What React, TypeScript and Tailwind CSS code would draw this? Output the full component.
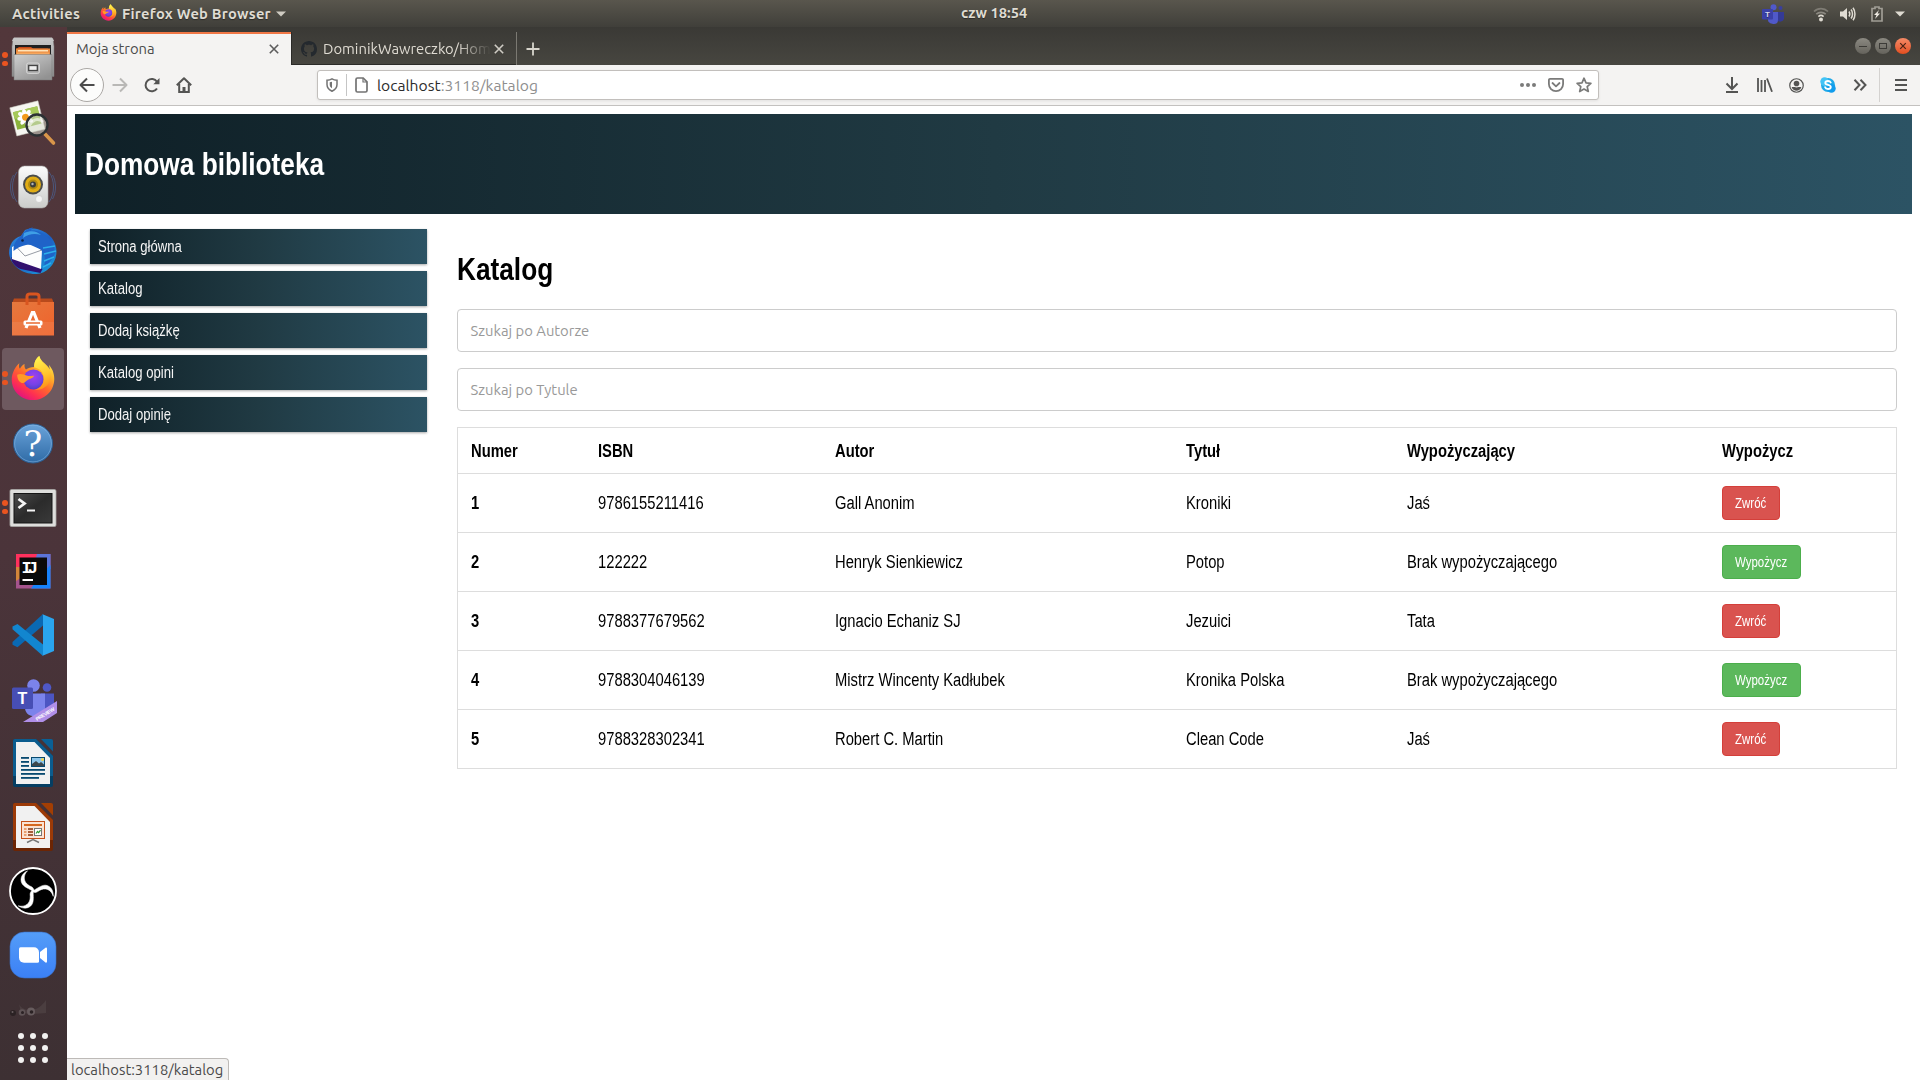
import type { ReactNode } from "react";

/* Condensed text: Liberation Sans squeezed to the proportions of its narrow cut. */
function Narrow({ children, className = "" }: { children: ReactNode; className?: string }) {
  return (
    <span className={`inline-block origin-left scale-x-[0.82] whitespace-nowrap font-['Liberation_Sans',sans-serif] ${className}`}>
      {children}
    </span>
  );
}

function FirefoxLogo({ size }: { size: number }) {
  return (
    <svg width={size} height={size} viewBox="0 0 48 48">
      <defs>
        <linearGradient id="ffBody" x1="0.85" y1="0.05" x2="0.25" y2="0.95">
          <stop offset="0" stopColor="#fff44f" />
          <stop offset="0.3" stopColor="#ffb32a" />
          <stop offset="0.55" stopColor="#ff6a2c" />
          <stop offset="0.8" stopColor="#ff3150" />
          <stop offset="1" stopColor="#e3157c" />
        </linearGradient>
        <radialGradient id="ffGlobe" cx="0.5" cy="0.35" r="0.7">
          <stop offset="0" stopColor="#a040f0" />
          <stop offset="0.6" stopColor="#7542e5" />
          <stop offset="1" stopColor="#4a3fc0" />
        </radialGradient>
        <linearGradient id="ffFlame" x1="0.4" y1="0" x2="0.6" y2="1">
          <stop offset="0" stopColor="#fff44f" />
          <stop offset="0.6" stopColor="#ffc12c" />
          <stop offset="1" stopColor="#ff8a16" />
        </linearGradient>
      </defs>
      <path
        d="M30.5 1c-4.500 3.500-5.500 8.500-5.300 11.500-3.700.1-6.200 1.100-8.500 2.600-.9-.6-2-2.700-1.500-5.600-2.200 1-3.700 2.900-4.800 4.900C9 13.400 9.200 10.600 9.800 8.700 6.500 11 1.800 18.500 1.800 25.500 1.800 37.800 11.800 47 24 47s22.200-9.600 22.200-22c0-6.500-2.700-11.700-5.700-14.500.6 1.700.9 3.500.9 4.600C39 9 32.500 8 30.500 1z"
        fill="url(#ffBody)"
      />
      <circle cx="24.500" cy="25.500" r="10.500" fill="url(#ffGlobe)" />
      <path d="M30.500 1c-4.500 3.500-5.300 8-5.300 12 5 .5 9.300 4 10 10 .9 7-3.600 12-9.200 13.200 9.500 1 16.500-5.700 16.500-14.200C42.500 12 32.500 10 30.500 1z" fill="url(#ffFlame)" />
      <path d="M7.500 20.500c4-1.500 8 .3 10.500 1.200 2.500.8 5-.2 7 0-.3 2.200-4.500 3.200-6.500 4.300-2.600 1.400-2.600 3-5 3.200-3.800 0-6-4.500-6-8.700z" fill="#ff9a28" />
    </svg>
  );
}

function FilesIcon() {
  return (
    <svg width="48" height="48" viewBox="0 0 48 48">
      <defs>
        <linearGradient id="fiTop" x1="0" y1="0" x2="0" y2="1">
          <stop offset="0" stopColor="#c9c9c9" />
          <stop offset="1" stopColor="#8e8e8e" />
        </linearGradient>
        <linearGradient id="fiFront" x1="0" y1="0" x2="0.700" y2="1">
          <stop offset="0" stopColor="#cfcfcf" />
          <stop offset="1" stopColor="#929292" />
        </linearGradient>
      </defs>
      <path d="M4 3.500h40l1 8v30H3v-30z" fill="url(#fiTop)" stroke="#7d7d7d" strokeWidth="0.500" />
      <path d="M5 2.500h38l2 3.500H3z" fill="#c6c6c6" />
      <rect x="6" y="10" width="36" height="12" fill="#202020" />
      <path d="M10 12h12l2 1.500h15V22H7v-8z" fill="#c74a19" />
      <rect x="7" y="13.500" width="34" height="8" fill="#e9893f" />
      <rect x="9" y="15" width="30" height="1.500" fill="#ffe3b8" />
      <rect x="8" y="17.500" width="32" height="4" fill="#f6a65c" />
      <path d="M5 19.500h38V45H5z" fill="url(#fiFront)" stroke="#777" strokeWidth="0.500" />
      <rect x="17.500" y="28" width="13" height="10.500" rx="2" fill="#b2b2b2" stroke="#dadada" strokeWidth="0.800" />
      <rect x="19.700" y="30.500" width="8.600" height="5" fill="#efefef" stroke="#454545" strokeWidth="1.300" />
    </svg>
  );
}

function ImageViewerIcon() {
  return (
    <svg width="48" height="48" viewBox="0 0 48 48">
      <g transform="rotate(-14 18 20)">
        <rect x="4" y="5" width="29" height="29" fill="#f6f6f1" stroke="#c9c9c0" strokeWidth="0.500" />
        <rect x="6" y="10" width="25" height="18" fill="#8bb33c" />
        <rect x="6" y="10" width="25" height="7" fill="#a6c95a" />
        {[0, 45, 90, 135, 180, 225, 270, 315].map((a) => (
          <ellipse key={a} cx="17" cy="14" rx="2.200" ry="4.500" fill="#fff" transform={`rotate(${a} 17 18)`} />
        ))}
        <circle cx="17" cy="18" r="3.500" fill="#f39a1b" />
      </g>
      <path d="M36 35l8.500 9" stroke="#d9964a" strokeWidth="3.600" strokeLinecap="round" />
      <circle cx="28" cy="26" r="10.500" fill="#d9dfcf" fillOpacity="0.550" stroke="#2c3134" strokeWidth="2.400" />
      <path d="M20 27c3-6 9-9 14-4" stroke="#fff" strokeOpacity="0.600" strokeWidth="3" fill="none" />
    </svg>
  );
}

function SpeakerIcon() {
  return (
    <svg width="48" height="48" viewBox="0 0 48 48">
      <g fill="none" stroke="#4b5f8c" strokeWidth="1" opacity="0.800">
        <path d="M8 9c-6 8-6 22 0 30M40 9c6 8 6 22 0 30M4.500 12c-4 7-4 17 0 24M43.500 12c4 7 4 17 0 24" />
      </g>
      <defs>
        <linearGradient id="spk" x1="0" y1="0" x2="0" y2="1">
          <stop offset="0" stopColor="#fcfcfc" />
          <stop offset="1" stopColor="#cbccca" />
        </linearGradient>
      </defs>
      <rect x="9.500" y="3" width="29.500" height="42" rx="6" fill="url(#spk)" stroke="#a9aaa8" strokeWidth="0.600" />
      <circle cx="24" cy="21.500" r="10" fill="#4a4c4b" />
      <circle cx="24" cy="21.500" r="8" fill="#e0ac15" />
      <circle cx="24" cy="21.500" r="5" fill="#b28b12" />
      <circle cx="24" cy="21.500" r="3" fill="#3b3d3d" />
      <circle cx="23.500" cy="21" r="1.200" fill="#b4b4b4" />
      <circle cx="30" cy="36" r="3.500" fill="#f4f4f4" stroke="#c4c4c4" strokeWidth="0.600" />
      <circle cx="16.500" cy="37.500" r="1.800" fill="none" stroke="#d2d2d2" strokeWidth="0.800" />
    </svg>
  );
}

function ThunderbirdIcon() {
  return (
    <svg width="48" height="48" viewBox="0 0 48 48">
      <defs>
        <linearGradient id="tb" x1="0.100" y1="0" x2="0.900" y2="1">
          <stop offset="0" stopColor="#2d8fe0" />
          <stop offset="0.500" stopColor="#1d5fc4" />
          <stop offset="1" stopColor="#1aa0dc" />
        </linearGradient>
      </defs>
      <path d="M16 3C25-2 47 5 47.500 24c.2 12-9 22.500-20 23C13 47.500 1 38 0 26 0 18 4 11 12 9z" fill="url(#tb)" />
      <path d="M2.500 30c-.6 6 5 10 9 12l20 4 2-4z" fill="#32106e" />
      <path d="M3 20l12-5 18 8-1 19L3 32z" fill="#fdfdfd" />
      <path d="M6 18.500l10 10.500 17-6" fill="none" stroke="#8a8f99" strokeWidth="0.900" />
      <path d="M12 9c3-5 8-8 12-8.500-2 2-2 3-2 3C34 3 45 12 46 26c-3 8-8 12-11 14 2-9 1-14-4-18-4-3-8-5-14-4-5 1-9 3-12.500 6C4 17 8 12 12 9z" fill="#1f63c8" />
      <path d="M15 6c7-3 13-2 17 2-6-2-13-1-18 3z" fill="#3f9fe6" />
      <path d="M34 21l12-2M35 27l12-3M35 34l10-4M34 40l8-4" stroke="#2cb0ea" strokeWidth="1.500" />
      <circle cx="13.500" cy="13.500" r="1.300" fill="#0d2346" />
    </svg>
  );
}

function SoftwareIcon() {
  return (
    <svg width="48" height="48" viewBox="0 0 48 48">
      <defs>
        <linearGradient id="sw" x1="0" y1="0" x2="1" y2="1">
          <stop offset="0" stopColor="#e5793e" />
          <stop offset="1" stopColor="#f0622b" />
        </linearGradient>
      </defs>
      <path d="M5 7.500h38l2 5H3z" fill="#b84a1c" />
      <rect x="3" y="11" width="42" height="33.500" fill="url(#sw)" />
      <path d="M3 31h42v13.500H3z" fill="#fff" fillOpacity="0.080" />
      <path d="M18 14V5.500Q18 3 21 3h6q3 0 3 2.500V14" fill="none" stroke="#d9551f" strokeWidth="3" />
      <path d="M17 37l6.300-15.500h1.500L31 37" fill="none" stroke="#fff" strokeWidth="3.200" />
      <rect x="14.500" y="29.500" width="19" height="5" rx="1.500" fill="#fff" />
      <path d="M17 32h14" stroke="#e9692f" strokeWidth="1.500" />
    </svg>
  );
}

function HelpIcon() {
  return (
    <svg width="48" height="48" viewBox="0 0 48 48">
      <defs>
        <linearGradient id="hp" x1="0" y1="0" x2="0" y2="1">
          <stop offset="0" stopColor="#6aa3da" />
          <stop offset="1" stopColor="#2f6ba6" />
        </linearGradient>
      </defs>
      <circle cx="24" cy="24.500" r="19.500" fill="url(#hp)" stroke="#2b5f94" />
      <circle cx="24" cy="24.500" r="18.400" fill="none" stroke="#8dbbe8" strokeOpacity="0.500" />
      <text x="24" y="37" textAnchor="middle" fontSize="35" fill="#fff" fontFamily="DejaVu Serif, serif">?</text>
    </svg>
  );
}

function TerminalIcon() {
  return (
    <svg width="48" height="48" viewBox="0 0 48 48">
      <defs>
        <linearGradient id="tm" x1="0" y1="0" x2="1" y2="1">
          <stop offset="0" stopColor="#4b4b4b" />
          <stop offset="0.500" stopColor="#2b2b2b" />
          <stop offset="1" stopColor="#3a3a3a" />
        </linearGradient>
      </defs>
      <rect x="1" y="6.500" width="46" height="37" rx="1.500" fill="#dededc" stroke="#a8a8a6" strokeWidth="0.800" />
      <rect x="5" y="10.500" width="38" height="29.500" fill="url(#tm)" stroke="#151515" />
      <path d="M9.500 16l6 4.500-6 4.500" fill="none" stroke="#f4f4f4" strokeWidth="2.800" />
      <path d="M18 27.500h8" stroke="#f4f4f4" strokeWidth="2" />
    </svg>
  );
}

function IntellijIcon() {
  return (
    <svg width="48" height="48" viewBox="0 0 48 48">
      <rect x="7" y="7" width="34.500" height="34.500" fill="#a5548d" />
      <path d="M7 7h24l-8 12-16 5z" fill="#fe315d" />
      <path d="M28 7h13.500v15L24 20z" fill="#5b74d8" />
      <path d="M41.500 18v23.500H22L30 30z" fill="#1783fb" />
      <path d="M7 20v14l6-4V20z" fill="#d3863a" />
      <rect x="10.500" y="10.500" width="27.500" height="27.500" fill="#0a0a0a" />
      <text x="12.500" y="25.500" fontSize="17" fontWeight="700" fill="#fff" fontFamily="Liberation Mono, monospace" textLength="16.500">IJ</text>
      <rect x="13.500" y="32" width="10.500" height="2" fill="#fff" />
    </svg>
  );
}

function VsCodeIcon() {
  return (
    <svg width="48" height="48" viewBox="0 0 48 48">
      <path d="M34 14.500L8.500 36.300 3.500 33.700V31L34 3z" fill="#0a69b3" />
      <path d="M34 33.500L8.500 13 3.500 15.500v2.700L34 45z" fill="#1286cf" />
      <path d="M33 3l12 5v32l-12 5c.8-.2 1-.8 1-1.500V4.500C34 3.800 33.800 3.200 33 3z" fill="#2aa5ee" />
    </svg>
  );
}

function TeamsIcon() {
  return (
    <svg width="48" height="48" viewBox="0 0 48 48">
      <circle cx="38" cy="12.500" r="4.300" fill="#4f58c6" />
      <circle cx="24.500" cy="10.500" r="6.300" fill="#7b83eb" />
      <path d="M32 18.500h13v13a7 7 0 01-13 2z" fill="#4c55c2" />
      <path d="M16 18.500h20v15c0 6-4 8-9 8s-11-2-11-9z" fill="#7b83eb" />
      <rect x="3" y="12.500" width="21" height="21.500" rx="1.500" fill="#474eb4" />
      <text x="13.500" y="29" textAnchor="middle" fontSize="16" fontWeight="700" fill="#fff" fontFamily="Liberation Sans, sans-serif">T</text>
      <path d="M14 47L48 26v12L34 47z" fill="#b08fe8" />
      <text transform="translate(28 46) rotate(-31)" fontSize="5" fontWeight="700" fill="#fff" fontFamily="Liberation Sans, sans-serif" textLength="21">PREVIEW</text>
    </svg>
  );
}

function DocShell({ dark, main, corner, children }: { dark: string; main: string; corner: string; children: ReactNode }) {
  return (
    <svg width="48" height="48" viewBox="0 0 48 48">
      <path d="M6 0h21l17 17v29a2 2 0 01-2 2H6a2 2 0 01-2-2V2a2 2 0 012-2z" fill={dark} />
      <path d="M6 0h21l17 17v20H4V2a2 2 0 012-2z" fill={main} />
      <path d="M32 0h10a2 2 0 012 2v10.500z" fill={corner} />
      <path d="M7 3h18.500L41 19v26H7z" fill="#f1f1f1" />
      {children}
    </svg>
  );
}

function WriterIcon() {
  return (
    <DocShell dark="#053e63" main="#0b5c8e" corner="#0a6096">
      <g fill="#07496f">
        <rect x="12" y="18" width="8" height="1.800" />
        <rect x="12" y="22" width="8" height="1.800" />
        <rect x="12" y="26" width="8" height="1.800" />
        <rect x="12" y="30" width="24" height="1.800" />
        <rect x="12" y="34" width="24" height="1.800" />
        <rect x="12" y="38" width="18" height="1.800" />
        <rect x="22" y="18" width="14" height="10" />
      </g>
      <rect x="23" y="19" width="12" height="8" fill="#8cc5ea" />
      <path d="M23 27v-2l4-3 3 2.500 2-1.500 3 2.500V27z" fill="#3c474d" />
      <circle cx="33.500" cy="20.500" r="1.500" fill="#f3d34a" />
    </DocShell>
  );
}

function ImpressIcon() {
  return (
    <DocShell dark="#6c2504" main="#9c3a07" corner="#a33e03">
      <rect x="12.500" y="18.500" width="23" height="17" fill="#fbe3d3" stroke="#c4511a" />
      <rect x="15" y="21" width="18" height="2" fill="#d5681f" />
      <path d="M15 26h2.500M15 29h2.500M15 32h2.500" stroke="#e48a52" strokeWidth="1.500" />
      <path d="M19 26h5M19 29h5M19 32h5" stroke="#8a3208" strokeWidth="1.500" />
      <rect x="25.500" y="25.500" width="7" height="7" fill="#fff" stroke="#777" />
      <path d="M27 30.500l1.500-2 1.200 1.200 1.800-2.500" stroke="#2d9b2d" strokeWidth="1.200" fill="none" />
      <path d="M18 39.500l6-3 6 3" stroke="#777" strokeWidth="1.500" fill="none" />
    </DocShell>
  );
}

function ObsIcon() {
  return (
    <svg width="48" height="48" viewBox="0 0 48 48">
      <circle cx="24" cy="24" r="23" fill="#000" stroke="#fff" strokeWidth="1.800" />
      <g fill="#fff" stroke="#fff" strokeWidth="0.500">
        {[0, 120, 240].map((a) => (
          <path
            key={a}
            transform={`rotate(${a} 24 24)`}
            d="M25 24C24.500 20.500 23 20 20.500 18.800 14.500 15.500 13.500 9 18.500 3.800 16 5 11 8.500 12.200 14.500 13.200 19 18 20.800 22.800 23.500L23.500 25z"
          />
        ))}
      </g>
    </svg>
  );
}

function ZoomIcon() {
  return (
    <svg width="48" height="48" viewBox="0 0 48 48">
      <defs>
        <linearGradient id="zm" x1="0" y1="0" x2="0" y2="1">
          <stop offset="0" stopColor="#549df8" />
          <stop offset="1" stopColor="#3b80f6" />
        </linearGradient>
      </defs>
      <rect x="1" y="1" width="46" height="46" rx="14.500" fill="url(#zm)" stroke="#3a6fc4" strokeWidth="0.600" />
      <path d="M10 17.500a1.500 1.500 0 011.500-1.500H25a5 5 0 015 5v9a1.500 1.500 0 01-1.500 1.500H15a5 5 0 01-5-5z" fill="#fff" transform="translate(0 .3)" />
      <path d="M31 21l5.500-4.200c.8-.5 1.500-.2 1.500.8v13c0 1-.7 1.300-1.500.8L31 27z" fill="#fff" />
    </svg>
  );
}

const dock: { name: string; icon: ReactNode; running?: boolean; active?: boolean }[] = [
  { name: "files", icon: <FilesIcon />, running: true },
  { name: "images", icon: <ImageViewerIcon /> },
  { name: "music", icon: <SpeakerIcon /> },
  { name: "mail", icon: <ThunderbirdIcon /> },
  { name: "software", icon: <SoftwareIcon /> },
  { name: "firefox", icon: <FirefoxLogo size={46} />, running: true, active: true },
  { name: "help", icon: <HelpIcon /> },
  { name: "terminal", icon: <TerminalIcon />, running: true },
  { name: "intellij", icon: <IntellijIcon /> },
  { name: "vscode", icon: <VsCodeIcon /> },
  { name: "teams", icon: <TeamsIcon /> },
  { name: "writer", icon: <WriterIcon /> },
  { name: "impress", icon: <ImpressIcon /> },
  { name: "obs", icon: <ObsIcon /> },
  { name: "zoom", icon: <ZoomIcon /> },
];

function Dock() {
  return (
    <aside className="flex w-[67px] shrink-0 flex-col bg-gradient-to-b from-[#52373b] via-[#4b343a] to-[#3d3033]">
      {dock.map((d) => (
        <div key={d.name} className="flex h-16 shrink-0 items-center pl-0.5">
          <div className={`flex h-[62px] w-[62px] items-center rounded ${d.active ? "bg-[#6e595f] pb-0.5" : ""}`}>
            <div className="flex w-[7px] shrink-0 flex-col gap-[3px]">
              {d.running && (
                <>
                  <span className="size-[5.500px] rounded-full bg-[#e95420]" />
                  <span className="size-[5.500px] rounded-full bg-[#e95420]" />
                </>
              )}
            </div>
            <div className="flex w-12 shrink-0 justify-center">{d.icon}</div>
          </div>
        </div>
      ))}
      <div className="flex h-[34px] shrink-0 items-end pl-2">
        <svg width="48" height="24" viewBox="0 0 48 24">
          <path d="M11 7c2 4 6 6 11 6 7 0 12-4 16-10v13c-9 1-17 1-25 0z" fill="#54484a" opacity="0.600" />
          <circle cx="5" cy="16" r="3" fill="#2b2224" />
          <circle cx="4.500" cy="15" r="1" fill="#6a5f61" />
          <circle cx="14" cy="15.500" r="3.300" fill="#5f5456" />
          <circle cx="23" cy="14.500" r="4" fill="#675c5e" />
          <circle cx="14.500" cy="15.500" r="1.500" fill="#2b2224" />
          <circle cx="23.500" cy="15" r="1.800" fill="#2b2224" />
        </svg>
      </div>
      <div className="ml-[18px] mt-[12px] grid w-[30px] grid-cols-3 gap-[6px]">
        {Array.from({ length: 9 }, (_, i) => (
          <span key={i} className="size-[6px] rounded-full bg-[#f2f1f0]" />
        ))}
      </div>
    </aside>
  );
}

function TopPanel() {
  return (
    <header className="grid h-[27px] shrink-0 grid-cols-[961px_68px_1fr] items-center bg-gradient-to-b from-[#59564d] to-[#403f3a] text-[14.667px] font-bold text-[#dfdbd2] [text-shadow:0_1px_1px_rgba(0,0,0,0.4)]">
      <div className="flex items-center pl-3">
        <span className="w-[88px] tracking-[0.020em]">Activities</span>
        <span className="-mt-0.5 flex w-[22px]">
          <FirefoxLogo size={17} />
        </span>
        <span className="tracking-[0.018em]">Firefox Web Browser</span>
        <svg width="10" height="6" viewBox="0 0 10 6" className="ml-[5px]">
          <path d="M0 .5h10L5 5.500z" fill="#cfcbc2" />
        </svg>
      </div>
      <span className="whitespace-nowrap pb-px">czw 18:54</span>
      <div className="flex items-center justify-end pr-[15px]">
        <svg width="22" height="20" viewBox="0 0 22 20">
          <circle cx="18.500" cy="4" r="2" fill="#3a3f9e" />
          <circle cx="11.500" cy="3.200" r="3" fill="#5059c9" />
          <path d="M15 8h7v7a4 4 0 01-7 1z" fill="#343a96" />
          <path d="M6 8h10v8c0 3-2 4-4 4s-6-1-6-4z" fill="#5059c9" />
          <rect x="0" y="5" width="11" height="10.500" rx="1" fill="#3b41a8" />
          <text x="5.500" y="13" textAnchor="middle" fontSize="8" fontWeight="700" fill="#d8d8ea" fontFamily="Liberation Sans, sans-serif">T</text>
        </svg>
        <svg width="16" height="16" viewBox="0 0 16 16" className="ml-[29px]" fill="none" strokeWidth="1.700">
          <path d="M1 5.500a10 10 0 0114 0" stroke="#7f7c74" />
          <path d="M3.300 8.200a7 7 0 019.400 0" stroke="#8d8a82" />
          <path d="M5.400 10.600a4 4 0 015.200 0" stroke="#dfdbd2" />
          <circle cx="8" cy="13.500" r="2" fill="#dfdbd2" />
        </svg>
        <svg width="16" height="16" viewBox="0 0 16 16" className="ml-[11px]" fill="none" stroke="#dfdbd2" strokeWidth="1.500">
          <path d="M0 5.500h3L7 2v12l-4-3.500H0z" fill="#dfdbd2" stroke="none" />
          <path d="M9 5.500c1 1.500 1 3.500 0 5M11 3.500c2 2.500 2 6.500 0 9M13 1.800c2.600 3.500 2.600 9 0 12.400" />
        </svg>
        <svg width="12" height="16" viewBox="0 0 12 16" className="ml-[15px]">
          <path d="M4 1h4v1.500h3V15H1V2.500h3z" fill="none" stroke="#a09d95" strokeWidth="1.700" />
          <path d="M8 4L3 9h2.500L4 13l5-5.500H6.500z" fill="#f0ece4" />
        </svg>
        <svg width="10" height="6" viewBox="0 0 10 6" className="ml-[12px]">
          <path d="M0 .5h10L5 5.500z" fill="#dfdbd2" />
        </svg>
      </div>
    </header>
  );
}

function CloseMark({ color }: { color: string }) {
  return (
    <svg width="10" height="10" viewBox="0 0 10 10" className="shrink-0">
      <path d="M.8.8l8.400 8.400M9.200.8L.8 9.200" stroke={color} strokeWidth="1.600" />
    </svg>
  );
}

function TabStrip() {
  return (
    <div className="flex h-[38px] shrink-0 items-end bg-gradient-to-b from-[#3a3935] to-[#474640] text-[14.800px]">
      <div className="flex h-[33px] w-[224px] shrink-0 items-center justify-between border-t-2 border-[#f07746] bg-[#f4f3f2] pb-[2px] pl-[9px] pr-[12px] text-[#4c4c4c]">
        <span className="pt-0.5">Moja strona</span>
        <CloseMark color="#5c5c5c" />
      </div>
      <div className="flex h-[33px] w-[225px] shrink-0 items-center border-b border-l border-[#2b2b28] pl-[9px] pt-px text-[#dfdbd2]">
        <svg width="16" height="16" viewBox="0 0 16 16" className="shrink-0">
          <path
            fill="#24292e"
            d="M8 0C3.580 0 0 3.580 0 8c0 3.540 2.290 6.530 5.470 7.590.4.070.55-.17.55-.38 0-.19-.01-.82-.01-1.490-2.010.37-2.530-.49-2.690-.94-.09-.23-.48-.94-.82-1.130-.28-.15-.68-.52-.01-.53.63-.01 1.080.58 1.230.82.72 1.210 1.870.87 2.330.66.07-.52.28-.87.51-1.070-1.780-.2-3.640-.89-3.640-3.950 0-.87.31-1.590.82-2.150-.08-.2-.36-1.020.08-2.120 0 0 .67-.21 2.200.82.64-.18 1.320-.27 2-.27s1.360.09 2 .27c1.530-1.040 2.200-.82 2.200-.82.44 1.100.16 1.920.08 2.120.51.56.82 1.270.82 2.150 0 3.070-1.870 3.750-3.650 3.950.29.25.54.73.54 1.480 0 1.070-.01 1.930-.01 2.200 0 .21.15.46.55.38A8.010 8.010 0 0016 8c0-4.420-3.580-8-8-8z"
          />
        </svg>
        <span className="ml-1.5 w-[168px] whitespace-nowrap pt-px [mask-image:linear-gradient(to_right,#000_80%,transparent_100%)]">
          DominikWawreczko/Hom
        </span>
        <span className="ml-[3px]">
          <CloseMark color="#cfccc4" />
        </span>
      </div>
      <div className="flex h-[33px] items-center border-l border-[#7b7972] pl-[9px]">
        <svg width="14" height="14" viewBox="0 0 14 14">
          <path d="M7 .5v13M.5 7h13" stroke="#d8d5cc" strokeWidth="1.800" />
        </svg>
      </div>
      <div className="ml-auto mr-[9px] flex gap-[4px] self-start pt-[11px]">
        <span className="flex size-4 items-center justify-center rounded-full bg-gradient-to-b from-[#8c8a82] to-[#65635c]">
          <svg width="8" height="8" viewBox="0 0 8 8"><path d="M0 4.500h8" stroke="#3c3b37" /></svg>
        </span>
        <span className="flex size-4 items-center justify-center rounded-full bg-gradient-to-b from-[#8c8a82] to-[#65635c]">
          <svg width="8" height="8" viewBox="0 0 8 8"><rect x=".5" y="1.500" width="7" height="5" fill="none" stroke="#3c3b37" /></svg>
        </span>
        <span className="flex size-4 items-center justify-center rounded-full bg-gradient-to-b from-[#f58a66] to-[#e34d1c]">
          <svg width="8" height="8" viewBox="0 0 8 8"><path d="M1.200 1.200l5.600 5.600M6.800 1.200L1.200 6.800" stroke="#4a2315" strokeWidth="1.200" /></svg>
        </span>
      </div>
    </div>
  );
}

function NavBar() {
  return (
    <div className="flex h-[41px] shrink-0 items-center border-b border-[#c3c1bf] bg-[#f4f3f2]">
      <div className="ml-[3px] flex size-[34px] items-center justify-center rounded-full border border-[#aba8a5] bg-[#fcfcfb]">
        <svg width="16" height="16" viewBox="0 0 16 16" fill="none" stroke="#4c4c4c" strokeWidth="2">
          <path d="M15.500 8H1.500M8 1.500L1.500 8 8 14.500" strokeLinejoin="round" />
        </svg>
      </div>
      <svg width="16" height="16" viewBox="0 0 16 16" className="ml-[8px]" fill="none" stroke="#b9b8b6" strokeWidth="2">
        <path d="M.5 8h14M8 1.500L14.500 8 8 14.500" strokeLinejoin="round" />
      </svg>
      <svg width="16" height="16" viewBox="0 0 16 16" className="ml-[16px]" fill="none" stroke="#545453" strokeWidth="2">
        <path d="M13 11.500A6.200 6.200 0 1113 4.800" />
        <path d="M15.500 1v6.200H9.300z" fill="#545453" stroke="none" />
      </svg>
      <svg width="16" height="16" viewBox="0 0 16 16" className="ml-[16px]" fill="none" stroke="#545453" strokeWidth="2">
        <path d="M.8 8.300L8 1.200l7.200 7.100" strokeLinejoin="round" />
        <path d="M3.200 7v8h9.600V7" />
        <path d="M8 15v-5" strokeWidth="3" />
      </svg>
      <div className="ml-[125px] flex h-[30px] w-[1282px] items-center rounded-[3px] border border-[#c2bfbc] bg-white shadow-[0_1px_3px_rgba(0,0,0,0.08)]">
        <svg width="12" height="14" viewBox="0 0 12 14" className="ml-[8px]">
          <path d="M1 2.200C3 2.200 4.500 1.800 6 .9c1.500.9 3 1.300 5 1.300v4.300c0 3.300-2 5.300-5 6.700-3-1.400-5-3.400-5-6.700z" fill="none" stroke="#737373" strokeWidth="1.500" />
          <path d="M6 3.800v6.400c-1.500-1-2.300-2-2.300-3.800V4.300c.9-.1 1.500-.2 2.300-.5z" fill="#737373" />
        </svg>
        <span className="ml-[8px] h-[22px] w-px bg-[#c5c5c5]" />
        <svg width="13" height="16" viewBox="0 0 13 16" className="ml-[8px]" fill="none" stroke="#737373" strokeWidth="1.700">
          <path d="M2.500 1h5.700L12 4.800v8.700a1.500 1.500 0 01-1.500 1.500h-8A1.500 1.500 0 011 13.500v-11A1.500 1.500 0 012.500 1z" />
          <path d="M8 1v4h4" strokeWidth="1.200" />
        </svg>
        <span className="ml-[9px] pt-px text-[15.650px] text-[#8e8e8e]">
          <span className="text-[#2c2c2c]">localhost</span>:3118/katalog
        </span>
        <div className="ml-auto flex items-center pr-[6px]">
          <svg width="16" height="4" viewBox="0 0 16 4" fill="#7b7b7a">
            <circle cx="2" cy="2" r="2" /><circle cx="8" cy="2" r="2" /><circle cx="14" cy="2" r="2" />
          </svg>
          <svg width="16" height="14" viewBox="0 0 16 14" className="ml-[12px]" fill="none" stroke="#7b7b7a" strokeWidth="1.800">
            <path d="M2 .9h12a1.100 1.100 0 011.100 1.100v4A7.100 7.100 0 018 13.100 7.100 7.100 0 01.9 6V2A1.100 1.100 0 012 .9z" />
            <path d="M4.500 5L8 8.300 11.500 5" strokeLinecap="round" strokeLinejoin="round" />
          </svg>
          <svg width="16" height="16" viewBox="0 0 16 16" className="ml-[12px]" fill="none" stroke="#7b7b7a" strokeWidth="1.700">
            <path d="M8 1.200l2 4.600 4.900.5-3.700 3.300 1.100 4.900L8 12l-4.300 2.500 1.100-4.900L1.100 6.300 6 5.800z" strokeLinejoin="round" />
          </svg>
        </div>
      </div>
      <div className="ml-auto flex h-full items-center pr-[13px]">
        <svg width="14" height="16" viewBox="0 0 14 16" fill="none" stroke="#545453" strokeWidth="2">
          <path d="M7 0v11.500M1.500 6.500L7 12l5.500-5.500M1 15h12" />
        </svg>
        <svg width="16" height="14" viewBox="0 0 16 14" className="ml-[18px]" fill="none" stroke="#545453" strokeWidth="1.800">
          <path d="M1 0v14M4.500 2v12M8 2v12M10 .5L15 13.700" />
        </svg>
        <svg width="15" height="15" viewBox="0 0 16 16" className="ml-[16px]">
          <circle cx="8" cy="8" r="7.200" fill="none" stroke="#545453" strokeWidth="1.300" />
          <circle cx="8" cy="5.800" r="3" fill="#545453" />
          <path d="M2.800 9.800c1.500-.6 2.500-.2 3.200-.1 1.200.5 2.800.5 4 0 .7-.1 1.700-.5 3.200.1-.8 2.300-3 3.700-5.200 3.700S3.600 12.100 2.800 9.800z" fill="#545453" />
        </svg>
        <svg width="16" height="16" viewBox="0 0 16 16" className="ml-[16px]">
          <circle cx="8" cy="8" r="7" fill="#1fa9e8" />
          <circle cx="4.600" cy="4.600" r="4.300" fill="#43c3f5" />
          <circle cx="11.400" cy="11.400" r="4.300" fill="#119cec" />
          <path d="M10.700 5.500C10.200 4.300 9 4 8 4 6.500 4 5.300 4.700 5.300 5.900 5.300 8.500 10.800 7.300 10.800 10c0 1.300-1.300 2-2.800 2-1.300 0-2.500-.5-2.900-1.800" fill="none" stroke="#fff" strokeWidth="1.800" strokeLinecap="round" />
        </svg>
        <svg width="14" height="12" viewBox="0 0 14 12" className="ml-[17px]" fill="none" stroke="#545453" strokeWidth="2">
          <path d="M1.500.7L6.500 6l-5 5.300M7.500.7l5 5.300-5 5.300" />
        </svg>
        <span className="ml-[12px] h-[34px] w-px bg-[#d4d2d0]" />
        <svg width="12" height="12" viewBox="0 0 12 12" className="ml-[15px]" stroke="#545453" strokeWidth="2">
          <path d="M0 1h12M0 6h12M0 11h12" />
        </svg>
      </div>
    </div>
  );
}

const menu = ["Strona główna", "Katalog", "Dodaj książkę", "Katalog opini", "Dodaj opinię"];

const NOBODY = "Brak wypożyczającego";

const books = [
  { isbn: "9786155211416", author: "Gall Anonim", title: "Kroniki", borrower: "Jaś" },
  { isbn: "122222", author: "Henryk Sienkiewicz", title: "Potop", borrower: NOBODY },
  { isbn: "9788377679562", author: "Ignacio Echaniz SJ", title: "Jezuici", borrower: "Tata" },
  { isbn: "9788304046139", author: "Mistrz Wincenty Kadłubek", title: "Kronika Polska", borrower: NOBODY },
  { isbn: "9788328302341", author: "Robert C. Martin", title: "Clean Code", borrower: "Jaś" },
];

const rowGrid = "grid grid-cols-[127.500px_237px_350.500px_221.500px_315px_1fr] items-center border-b border-[#dddddd]";
const cell = "pb-px pl-[12.500px]";

function LibraryPage() {
  return (
    <main className="flex-1 p-2 text-black">
      <div className="flex h-[100px] items-center bg-[linear-gradient(to_right,#0f2027,#203a43,#2c5364)] pb-0.5 pl-[10px]">
        <h1 className="text-[32px] font-bold leading-9 text-white">
          <Narrow>Domowa biblioteka</Narrow>
        </h1>
      </div>
      <div className="flex">
        <nav className="ml-[15px] mt-[15px] flex w-[337px] shrink-0 flex-col gap-[7px]">
          {menu.map((m) => (
            <a
              key={m}
              className="flex h-[35px] items-center bg-[linear-gradient(to_right,#0f2027,#203a43,#2c5364)] pl-2 text-base text-[#f5f5f5] shadow-[0_1px_3px_rgba(0,0,0,0.12),0_1px_2px_rgba(0,0,0,0.24)]"
            >
              <Narrow>{m}</Narrow>
            </a>
          ))}
        </nav>
        <section className="ml-[30px] mr-[15px] flex-1 pt-[36px]">
          <h2 className="text-[32px] font-bold leading-9">
            <Narrow>Katalog</Narrow>
          </h2>
          <div className="mt-[22px] flex flex-col gap-4 text-[14.800px] text-[#999999]">
            <div className="flex h-[43px] items-center rounded border border-[#cccccc] pl-[12.500px] pt-px">Szukaj po Autorze</div>
            <div className="flex h-[43px] items-center rounded border border-[#cccccc] pl-[12.500px] pt-px">Szukaj po Tytule</div>
          </div>
          <div className="mt-4 border-x border-t border-[#dddddd] text-lg leading-6">
            <div className={`${rowGrid} h-[46px] font-bold`}>
              {["Numer", "ISBN", "Autor", "Tytuł", "Wypożyczający", "Wypożycz"].map((h) => (
                <div key={h} className="pl-[12.500px]"><Narrow>{h}</Narrow></div>
              ))}
            </div>
            {books.map((b, i) => (
              <div key={b.isbn} className={`${rowGrid} h-[59px]`}>
                <div className={`${cell} font-bold`}><Narrow>{i + 1}</Narrow></div>
                <div className={cell}><Narrow>{b.isbn}</Narrow></div>
                <div className={cell}><Narrow>{b.author}</Narrow></div>
                <div className={cell}><Narrow>{b.title}</Narrow></div>
                <div className={cell}><Narrow>{b.borrower}</Narrow></div>
                <div className="flex pl-[12.500px] text-sm text-white">
                  {b.borrower === NOBODY ? (
                    <button className="flex h-[34px] w-[79px] items-center rounded border border-[#4cae4c] bg-[#5cb85c] pl-3">
                      <Narrow>Wypożycz</Narrow>
                    </button>
                  ) : (
                    <button className="flex h-[34px] w-[58px] items-center rounded border border-[#d43f3a] bg-[#d9534f] pl-3">
                      <Narrow>Zwróć</Narrow>
                    </button>
                  )}
                </div>
              </div>
            ))}
          </div>
        </section>
      </div>
    </main>
  );
}

export default function App() {
  return (
    <div className="flex h-[1080px] w-[1920px] flex-col overflow-hidden bg-white font-[Ubuntu,'Noto_Sans',sans-serif]">
      <TopPanel />
      <div className="flex min-h-0 flex-1">
        <Dock />
        <div className="relative flex flex-1 flex-col bg-white">
          <TabStrip />
          <NavBar />
          <LibraryPage />
          <div className="absolute bottom-0 left-0 flex h-[22px] w-[162px] items-center rounded-tr-[4px] border-r border-t border-[#bdbab7] bg-[#f2f1f0] pl-1 pt-px text-[14.800px] text-[#4a4a4a]">
            localhost:3118/katalog
          </div>
        </div>
      </div>
    </div>
  );
}
